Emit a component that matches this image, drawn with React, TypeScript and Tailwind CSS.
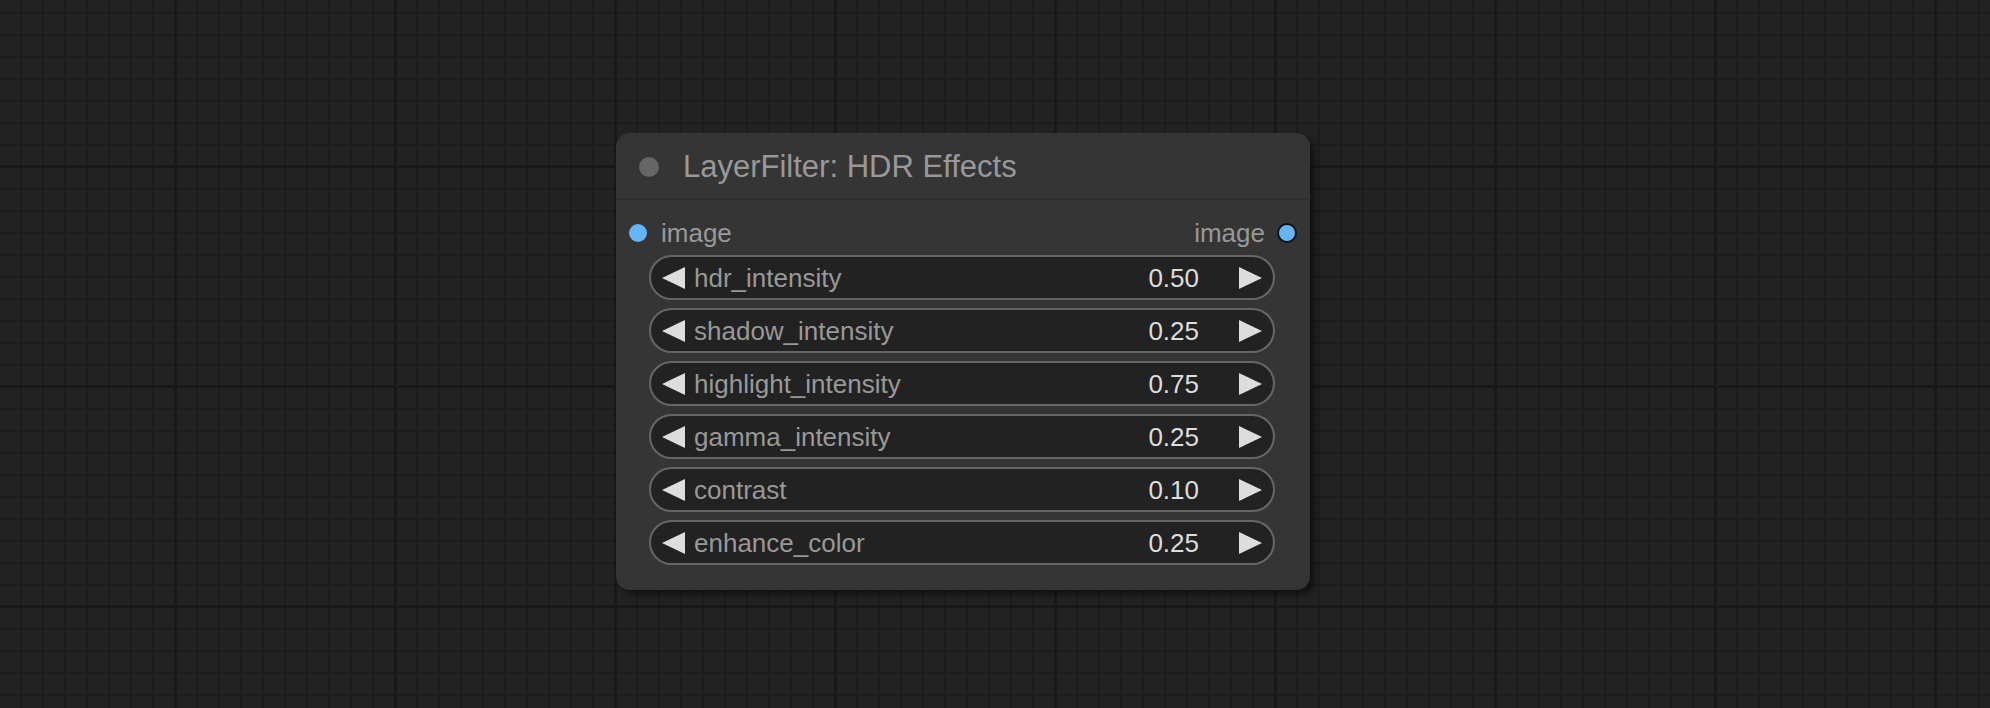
import React from "react";

// widget values shown on the node
const widgets = [
  { name: "hdr_intensity", value: "0.50" },
  { name: "shadow_intensity", value: "0.25" },
  { name: "highlight_intensity", value: "0.75" },
  { name: "gamma_intensity", value: "0.25" },
  { name: "contrast", value: "0.10" },
  { name: "enhance_color", value: "0.25" },
];

const Arrow = ({ dir }: { dir: "left" | "right" }) => (
  <svg width="23" height="22" viewBox="0 0 23 22" className="shrink-0">
    {dir === "left" ? (
      <polygon points="23,0 23,22 0,11" fill="#dddddd" />
    ) : (
      <polygon points="0,0 0,22 23,11" fill="#dddddd" />
    )}
  </svg>
);

const NumberWidget = ({ name, value }: { name: string; value: string }) => (
  <div className="flex items-center h-[45px] w-[626px] rounded-full border-2 border-[#666] bg-[#222] pl-[11px] pr-[11px]">
    <Arrow dir="left" />
    <span className="ml-[9px] text-[26px] text-[#999] leading-none">{name}</span>
    <span className="ml-auto mr-[40px] text-[26px] text-[#ddd] leading-none">{value}</span>
    <Arrow dir="right" />
  </div>
);

export default function App() {
  return (
    <div
      className="relative w-[1990px] h-[708px] overflow-hidden bg-[#222] bg-[linear-gradient(to_right,#181818_3px,transparent_3px),linear-gradient(to_bottom,#181818_3px,transparent_3px),linear-gradient(to_right,#1c1c1c_2px,transparent_2px),linear-gradient(to_bottom,#1c1c1c_2px,transparent_2px)] bg-[size:220px_220px,220px_220px,22px_22px,22px_22px] bg-[position:174px_165px,174px_165px,20px_12px,20px_12px]"
      style={{ fontFamily: '"Liberation Sans", Arial, sans-serif' }}
    >
      {/* node */}
      <div className="absolute left-[616px] top-[133px] w-[694px] h-[457px] rounded-[14px] bg-[#353535] shadow-[5px_5px_6px_rgba(0,0,0,0.45)]">
        {/* title */}
        <div className="flex items-center h-[67px] border-b-2 border-[#2e2e2e] pl-[23px] pt-[2px]">
          <div className="w-[20px] h-[20px] rounded-full bg-[#666]" />
          <span className="ml-[24px] text-[31px] text-[#999] leading-none">LayerFilter: HDR Effects</span>
        </div>

        {/* slots */}
        <div className="flex items-center justify-between h-[55px] pl-[13px] pr-[13px] pt-[11px]">
          <div className="flex items-center">
            <div className="w-[18px] h-[18px] rounded-full bg-[#64b5f6]" />
            <span className="ml-[14px] text-[26px] text-[#999] leading-none">image</span>
          </div>
          <div className="flex items-center">
            <span className="mr-[12px] text-[26px] text-[#999] leading-none">image</span>
            <div className="w-[20px] h-[20px] rounded-full bg-[#64b5f6] border-2 border-[#111]" />
          </div>
        </div>

        {/* widgets */}
        <div className="flex flex-col gap-[8px] pl-[33px]">
          {widgets.map((w) => (
            <NumberWidget key={w.name} name={w.name} value={w.value} />
          ))}
        </div>
      </div>
    </div>
  );
}
